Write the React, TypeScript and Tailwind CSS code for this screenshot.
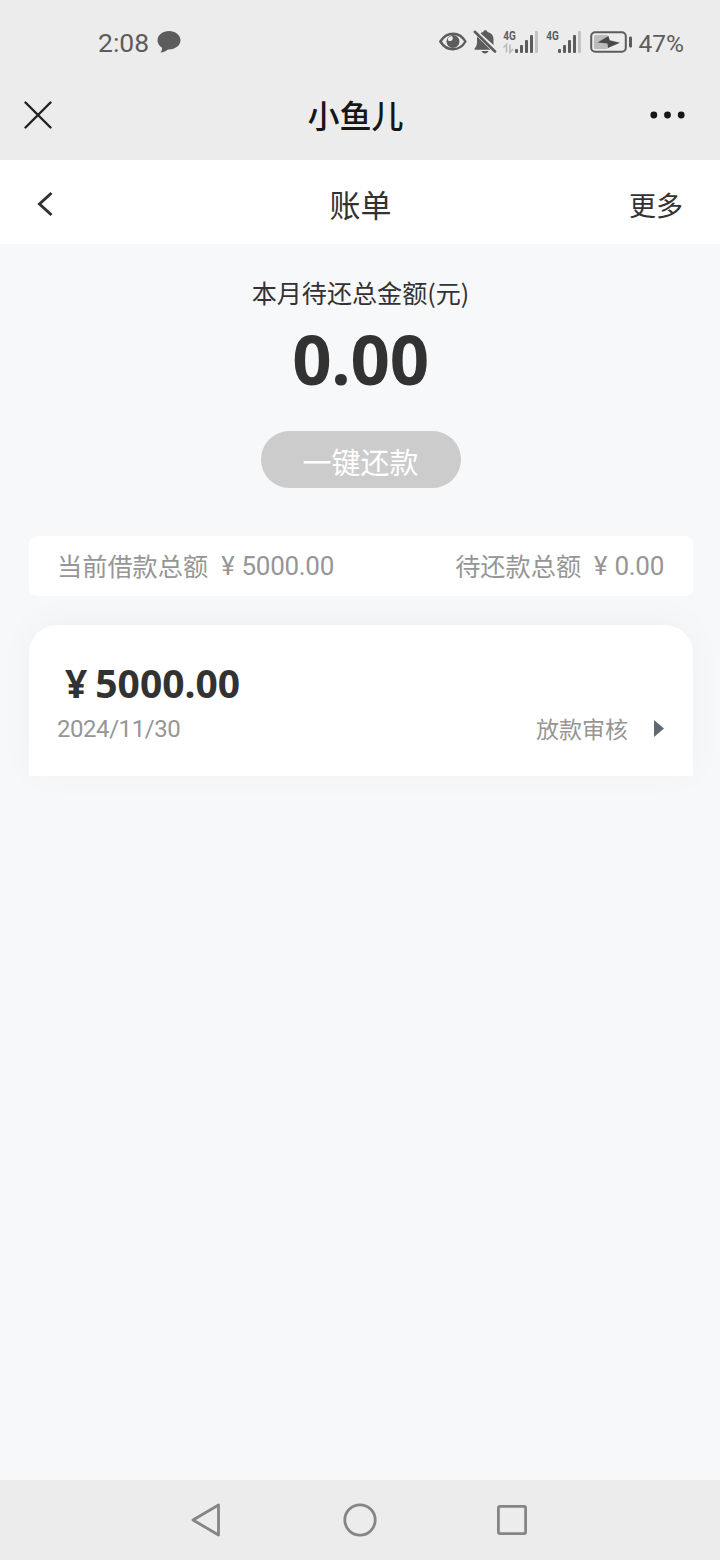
import type { ReactNode } from "react";

function SignalIcon({ dataArrows }: { dataArrows?: boolean }) {
  return (
    <svg width="36" height="32" viewBox="0 -3 36 32" fill="#5c5c5c" overflow="visible">
      <text
        x="0.2"
        y="11"
        fontSize="12.500"
        fontWeight="700"
        textLength="12.500"
        lengthAdjust="spacingAndGlyphs"
        fontFamily="Roboto, sans-serif"
      >
        4G
      </text>
      {dataArrows && (
        <path d="M.5 18.500 3.500 15.500v8M7 15.500v8l3.200-3.500" fill="none" stroke="#bdbdbd" strokeWidth="1.700" />
      )}
      <rect x="12" y="20" width="3" height="4" rx="1" />
      <rect x="17" y="16" width="3" height="8" rx="1" />
      <rect x="22" y="11" width="3" height="13" rx="1" />
      <rect x="27" y="6" width="3" height="18" rx="1" />
      <rect x="32" y="2" width="3" height="22" rx="1" fill="#c2c2c2" />
    </svg>
  );
}

function StatusBar() {
  return (
    <div className="flex h-20 items-center pt-1 pr-9 pl-[98px] text-[#5c5c5c]">
      <span className="pt-px font-[Roboto,sans-serif] text-[26.500px] leading-8">2:08</span>
      <svg className="ml-2" width="24" height="24" viewBox="0 0 24 24" fill="#5c5c5c">
        <path d="M12 1C5.800 1 .5 5 .5 10.300c0 3.400 1.700 5.700 4.500 7.500.3 1.700-.4 3.300-1.500 4.600 3.200-.3 5.500-1.300 7.300-3 7.200.4 12.700-3.700 12.700-9.100C23.500 5 18.200 1 12 1z" />
      </svg>

      <div className="ml-auto flex items-center">
        <svg width="28" height="20" viewBox="0 0 28 20" fill="none">
          <path
            d="M1.300 9.500C4.500 4.500 9 1.700 14 1.700s9.500 2.800 12.500 7.800c-3 5-7.500 7.800-12.500 7.800S4.500 14.500 1.300 9.500z"
            stroke="#5c5c5c"
            strokeWidth="2.400"
            strokeLinejoin="round"
          />
          <circle cx="14" cy="9.500" r="6.500" fill="#5c5c5c" />
          <path d="M9.500 5.500c2-1.800 4-1.600 4.300.2.300 2.200-1.500 3.600-3.600 3.400-1.400-.2-1.800-2.300-.7-3.600z" fill="#ececec" />
        </svg>
        <svg className="ml-[6px]" width="24" height="26" viewBox="0 0 24 26" fill="#5c5c5c">
          <path d="M7.500 4.200c.8-.6 1.700-1 2.700-1.200C10.500 1.800 11.200 1.200 12.300 1.200s1.900.6 2.200 1.800c3.900.8 6 3.600 6 7.300v5.700z" />
          <path d="M4 7.500 17.500 20.700H2.200c-.7 0-.9-.8-.5-1.300 1.500-1.900 2.300-3.300 2.300-6.200zM8.500 22h7c-.5 1.600-1.800 2.500-3.500 2.500s-3-.9-3.500-2.500z" />
          <path d="M1.800 2.800 22 22.500" stroke="#5c5c5c" strokeWidth="2.600" strokeLinecap="round" />
        </svg>
        <div className="ml-[6px] flex gap-[7px]">
          <SignalIcon dataArrows />
          <SignalIcon />
        </div>
        <svg className="ml-2" width="43" height="22" viewBox="0 0 43 22">
          <rect
            x="1.200"
            y="1.200"
            width="34.600"
            height="19.600"
            rx="4"
            fill="none"
            stroke="#5c5c5c"
            strokeWidth="2"
          />
          <rect x="4" y="4" width="14" height="14" rx="1.500" fill="#bcbcbc" />
          <path d="M7.500 11.500 18.500 5l1.200 4.300L30 11.800 18 17l-.5-4.400z" fill="#4a4a4a" />
          <rect x="39" y="5.500" width="3" height="11" rx="1.200" fill="#5c5c5c" />
        </svg>
        <span className="ml-[6px] pt-[3px] font-[Roboto,sans-serif] text-[24.500px] leading-8">47%</span>
      </div>
    </div>
  );
}

function TitleBar() {
  return (
    <div className="grid h-20 grid-cols-3 items-center pr-[35px] pb-[10px] pl-6">
      <svg width="28" height="28" viewBox="0 0 28 28" stroke="#222" strokeWidth="2.400">
        <path d="M1.500 1.500l25 25M26.500 1.500l-25 25" strokeLinecap="round" />
      </svg>
      <h1 className="pb-[3px] pl-[2px] text-center text-[32px] leading-10 font-medium text-[#161616]">
        小鱼儿
      </h1>
      <svg className="ml-auto" width="35" height="8" viewBox="0 0 35 8" fill="#161616">
        <circle cx="3.800" cy="4" r="3.400" />
        <circle cx="17.500" cy="4" r="3.400" />
        <circle cx="31.200" cy="4" r="3.400" />
      </svg>
    </div>
  );
}

function PageNav() {
  return (
    <div className="grid h-[84px] grid-cols-3 items-center bg-white px-[37px] text-[#323233]">
      <svg className="mt-1" width="16" height="26" viewBox="0 0 16 26" fill="none" stroke="#323233" strokeWidth="3">
        <path d="M14.500 2 2.500 13l12 11" />
      </svg>
      <h2 className="pt-1 pl-px text-center text-[31px] leading-10">账单</h2>
      <span className="pt-[6px] text-right text-[27px] leading-9">更多</span>
    </div>
  );
}

function SummaryItem({ label, children }: { label: string; children: ReactNode }) {
  return (
    <div className="flex items-center leading-9">
      <span className="-mt-[3px] text-[25.200px]">{label}</span>
      <span className="ml-[13px] font-[Roboto,sans-serif] text-[25.500px]">¥</span>
      <span className="ml-[7px] font-[Roboto,sans-serif] text-[26px] tracking-[-0.3px]">
        {children}
      </span>
    </div>
  );
}

function BottomNav() {
  return (
    <div className="flex h-20 items-center justify-between bg-[#ececec] px-[190px]">
      <svg width="34" height="36" viewBox="0 0 34 36" fill="none" stroke="#858585" strokeWidth="2.800">
        <path d="M28.500 3v30L3 18z" strokeLinejoin="round" />
      </svg>
      <svg width="34" height="34" viewBox="0 0 34 34" fill="none" stroke="#858585" strokeWidth="2.800">
        <circle cx="17" cy="17" r="15.200" />
      </svg>
      <svg width="34" height="34" viewBox="0 0 34 34" fill="none" stroke="#858585" strokeWidth="2.800">
        <rect x="2.400" y="3.400" width="27.200" height="27.200" rx="1.500" />
      </svg>
    </div>
  );
}

export default function App() {
  return (
    <main className="flex h-[1560px] w-[720px] flex-col overflow-hidden bg-[#f7f8fa] font-['Noto_Sans_CJK_SC',sans-serif]">
      <header className="bg-[#ececec]">
        <StatusBar />
        <TitleBar />
      </header>
      <PageNav />

      <section className="flex flex-1 flex-col pr-[27.500px] pl-[28.500px]">
        <div className="flex flex-col items-center pt-[30px] text-[#323233]">
          <p className="text-[25.100px] leading-9">本月待还总金额(元)</p>
          <p className="mt-2 font-['Noto_Sans',sans-serif] text-[69px] leading-[80px] font-bold tracking-[-0.3px]">
            0.00
          </p>
          <button className="mt-[33px] h-[57px] w-[200px] rounded-full bg-[#ccc] pt-1 text-[29px] leading-none text-white">
            一键还款
          </button>
        </div>

        <div className="relative z-10 mt-12 flex h-[60px] items-center justify-between rounded-lg bg-white px-[28.500px] text-[#969696]">
          <SummaryItem label="当前借款总额">5000.00</SummaryItem>
          <SummaryItem label="待还款总额">0.00</SummaryItem>
        </div>

        <div className="mt-[29px] h-[151px] rounded-t-[28px] bg-white px-[28.500px] pt-8 shadow-[0_-4px_36px_rgba(0,0,0,0.035)]">
          <p className="pl-[8px] font-['Noto_Sans',sans-serif] text-[39px] leading-[52px] font-bold text-[#323233]">
            <span className="mr-2">¥</span>
            <span>5000.00</span>
          </p>
          <div className="flex items-center text-[23px] leading-9 text-[#969696]">
            <span className="pt-[2px] font-[Roboto,sans-serif] text-[24px] tracking-[-0.45px]">
              2024/11/30
            </span>
            <span className="ml-auto">放款审核</span>
            <svg className="ml-[26px]" width="10" height="17" viewBox="0 0 10 17" fill="#606970">
              <path d="M0 0l10 8.500L0 17z" />
            </svg>
          </div>
        </div>
      </section>

      <BottomNav />
    </main>
  );
}
